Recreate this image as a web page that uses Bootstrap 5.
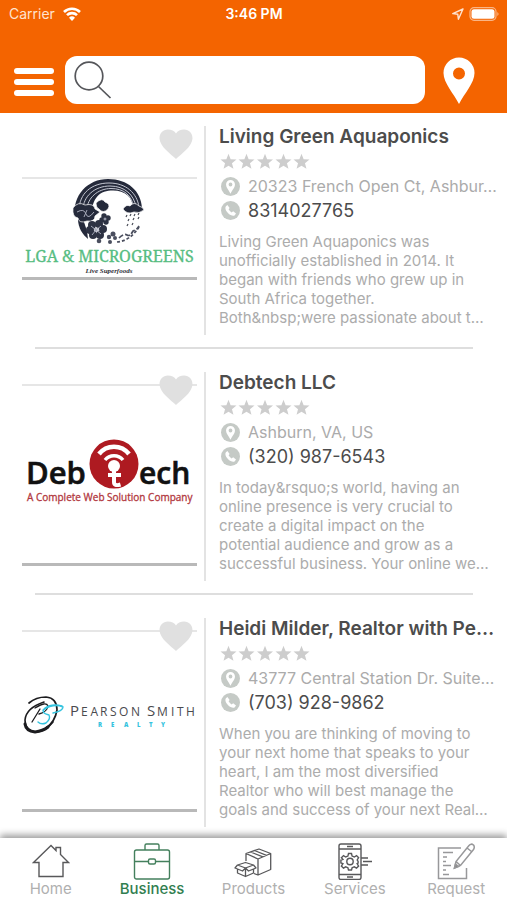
<!DOCTYPE html>
<html lang="en">
<head>
<meta charset="utf-8">
<meta name="viewport" content="width=device-width, initial-scale=1">
<title>Business directory</title>
<link rel="stylesheet" href="https://cdn.jsdelivr.net/npm/bootstrap@5.3.0/dist/css/bootstrap.min.css">
<style>
  body { font-family: Inter, "Liberation Sans", sans-serif; color: #4c4c4c; background: #fff; }
  .app-header { background: #f46400; color: #fff; height: 113px; }
  .status-bar { height: 28px; font-size: 14px; line-height: 28px; padding: 0 8px 0 9px; }
  .status-side { flex: 1 1 0; }
  .carrier { color: #ffe3cf; }
  .search-row { padding: 0 32px 9px 13px; gap: 11px; }
  .search-box { height: 48px; background: #fff; border-radius: 12px; padding-left: 9px; }
  .search-box input { outline: 0; min-width: 0; }
  .plain-btn { background: none; border: 0; padding: 0; line-height: 0; color: inherit; }
  .pin-btn { margin-left: 7px; }
  .listings { padding-top: 13px; }
  .listing { padding: 0 9px 0 22px; }
  .listing-body { height: 209px; }
  .thumb { width: 175px; height: 209px; padding-top: 12px; }
  .thumb-frame { border-top: 2px solid #e6e6e6; border-bottom: 3px solid #b9b9b9; }
  .thumb-frame svg { display: block; width: 100%; }
  .thumb-wide { margin-top: 39px; }
  .heart { top: 3px; right: 4px; color: #e0e0e0; }
  .details { border-left: 2px solid #e3e3e3; margin-left: 7px; padding-left: 13px; min-width: 0; }
  .biz-name { font-size: 19px; line-height: 22px; font-weight: 600; margin: 0; }
  .stars { height: 26px; padding: 1px 0 0 1px; color: #cdcdcd; }
  .info-line { height: 24px; gap: 8px; padding-left: 2px; color: #c5cac6; }
  .addr { font-size: 16px; color: #ababab; white-space: nowrap; }
  .phone { font-size: 18px; color: #4c4c4c; }
  .about { font-size: 15px; line-height: 19px; color: #acacac; margin: 10px 9px 0 0; }
  .rule { border: 0; border-top: 2px solid #dedede; opacity: 1; margin: 12px 25px 23px 13px; }
  .tab-bar { background: #fff; height: 62px; box-shadow: 0 -3px 7px rgba(0,0,0,.4); }
  .tab-item { font-size: 15px; line-height: 18px; color: #b0b0b0; padding-top: 4px; }
  .tab-item.active { color: #317e50; font-weight: 500; }
  .tab-item svg { display: block; margin: 0 auto; }
</style>
<script src="https://cdn.jsdelivr.net/npm/bootstrap@5.3.0/dist/js/bootstrap.bundle.min.js"></script>
</head>
<body>
<svg width="0" height="0" class="position-absolute" aria-hidden="true">
  <symbol id="heart" viewBox="0 0 34 30"><path fill="currentColor" d="M17 30C12 25 1 18 .5 9.500C.5 4 4 .5 8.800 .5C12.500 .5 15.600 2 17 4.500C18.400 2 21.500 .5 25.200 .5C30 .5 33.500 4 33.500 9.500C33 18 22 25 17 30z"/></symbol>
  <symbol id="star" viewBox="0 0 24 24"><path fill="currentColor" d="M12 1l3 7.700 8.300.5-6.400 5.200 2.100 8L12 18l-7 4.400 2.100-8L.7 9.200 9 8.700z"/></symbol>
  <symbol id="stars5" viewBox="0 0 90 18"><g fill="currentColor"><use href="#star" width="17" height="17" x="0"/><use href="#star" width="17" height="17" x="18"/><use href="#star" width="17" height="17" x="36.500"/><use href="#star" width="17" height="17" x="55"/><use href="#star" width="17" height="17" x="73"/></g></symbol>
  <symbol id="place" viewBox="0 0 20 20"><circle cx="10" cy="10" r="10" fill="currentColor"/><path fill="#fff" fill-rule="evenodd" d="M10 17.500C8 13.500 5.300 11 5.300 7.900a4.700 4.700 0 0 1 9.400 0C14.700 11 12 13.500 10 17.500zM10 9.900a2 2 0 1 0 0-4a2 2 0 0 0 0 4z"/></symbol>
  <symbol id="call" viewBox="0 0 20 20"><circle cx="10" cy="10" r="10" fill="currentColor"/><path fill="#fff" d="M5.200 5.500l1.500-1.200 2.400 3-1.100 1.500c.7 1.400 1.800 2.500 3.200 3.200l1.600-1.100 3 2.300-1.300 1.700c-.9.900-2.500.8-4.400-.2-2-1.100-3.800-2.900-4.800-4.800-.8-1.700-.9-3.400-.1-4.400z"/></symbol>
</svg>

<div class="d-flex flex-column min-vh-100">
  <header class="app-header d-flex flex-column justify-content-between">
    <div class="status-bar d-flex align-items-center">
      <div class="status-side carrier d-flex align-items-center gap-2">
        <span>Carrier</span>
        <svg width="18" height="14" viewBox="0 0 18 14" fill="none" stroke="#fff" stroke-width="2.600"><path d="M1 5a11.300 11.300 0 0 1 16 0M4 8.200a7 7 0 0 1 10 0"/><path fill="#fff" stroke="none" d="M9 14l-3-3.200a4.300 4.300 0 0 1 6 0z"/></svg>
      </div>
      <div class="fw-semibold">3:46 PM</div>
      <div class="status-side d-flex align-items-center justify-content-end gap-1">
        <svg width="14" height="14" viewBox="0 0 14 14" fill="none" stroke="#ffe3cf" stroke-width="1.400" stroke-linejoin="round"><path d="M12 2L1.800 6.600l5 .7.600 4.900z"/></svg>
        <svg width="30" height="14" viewBox="0 0 30 14"><rect x="1" y=".7" width="26" height="12.600" rx="4" fill="none" stroke="#fab585" stroke-width="1.200"/><rect x="2.500" y="2.300" width="23" height="9.400" rx="2.500" fill="#fff"/><path d="M28.300 5v4q1.300-.8 1.300-2t-1.300-2z" fill="#fab585"/></svg>
      </div>
    </div>
    <div class="search-row d-flex align-items-center">
      <button class="plain-btn" type="button" aria-label="Menu">
        <svg width="41" height="32" viewBox="0 0 41 32"><g fill="#fff"><rect x="1" y="4" width="40" height="6" rx="3"/><rect x="1" y="15" width="40" height="6" rx="3"/><rect x="1" y="26" width="40" height="6" rx="3"/></g></svg>
      </button>
      <div class="search-box flex-grow-1 d-flex align-items-center">
        <svg width="38" height="38" viewBox="0 0 38 38" fill="none" stroke="#55565a" stroke-width="1.700"><circle cx="15" cy="15" r="13.800"/><path d="M24.500 25.500L36.500 37"/></svg>
        <input class="border-0 bg-transparent flex-grow-1" type="text" aria-label="Search">
      </div>
      <button class="plain-btn pin-btn" type="button" aria-label="Location">
        <svg width="32" height="47" viewBox="0 0 32 47"><path fill="#fff" fill-rule="evenodd" d="M16 47C11 37 .5 26 .5 16a15.500 15.500 0 0 1 31 0C31.500 26 21 37 16 47zM16 22.500a6 6 0 1 0 0-12a6 6 0 0 0 0 12z"/></svg>
      </button>
    </div>
  </header>

  <main class="listings flex-grow-1">
    <article class="listing">
      <div class="listing-body d-flex">
        <div class="thumb position-relative flex-shrink-0">
          <div class="thumb-frame thumb-wide">
            <svg height="98" viewBox="0 0 175 98" role="img" aria-label="LGA and Microgreens">
              <path d="M53 38C50 16 66 0 86 0S119 12 120 29L111 30C111 18 103 11.500 91 11.500C78 11.500 70 18 69 38z" fill="#252a3b"/>
              <g fill="none" stroke="#c4c7d2" stroke-width="1">
                <path d="M57 32C57 14 70 4 87 4S115 14 117 28"/>
                <path d="M61 31C61 17 73 7 88 7S112 16 114 28"/>
                <path d="M65 31C65 19 76 9.500 89 9.500S109 16 112 28"/>
              </g>
              <path d="M56 40C56 49 61 56 66 60L65 52L61 40z" fill="#252a3b"/>
              <g fill="#252a3b" stroke="#fff" stroke-width=".7">
                <path d="M51 29q5-7 12-3 9-2 10 4l5 3-5 4q0 6-8 5-8 3-9-3-6-1-5-10z"/>
                <path d="M74 24q6-6 9-1 6 2 3 7-5 5-9 0-3-1-3-6z"/>
                <path d="M101 30q3-5 7-3 4-5 9 0 4 1 5 4-5 4-10 2-7 3-11-3z"/>
              </g>
              <g fill="#2d3243"><circle cx="82" cy="37" r="2.700"/><circle cx="86" cy="39" r="2.700"/><circle cx="84" cy="43" r="2.700"/><circle cx="80" cy="41" r="2.700"/></g>
              <g fill="#2d3243"><circle cx="70" cy="46" r="4"/><circle cx="77" cy="45" r="4"/><circle cx="81" cy="50" r="4"/><circle cx="78" cy="56" r="4"/><circle cx="71" cy="56" r="4"/><circle cx="68" cy="51" r="4"/></g>
              <g fill="#4a4e5e"><circle cx="77" cy="62" r="2.300"/><circle cx="87" cy="58" r="2.200"/><circle cx="91" cy="55" r="2.500"/><circle cx="88" cy="63" r="2"/><circle cx="93" cy="59" r="2"/></g>
              <g fill="none" stroke="#a7aaba" stroke-width="1"><path d="M55 33q7-4 9 2t8-2M62 38l3-7M69 47l5 4 5-4M70 56l4-5 5 4"/><circle cx="74.500" cy="51" r="1.800"/><circle cx="83" cy="40" r="1"/></g>
              <g fill="none" stroke="#4a4e5e" stroke-width="1.700"><path d="M95 63Q108 62 117 48" stroke-dasharray="3 2"/><path d="M97 59q5-5 8-3t6-4q4-1 6-5" stroke-dasharray="5 2"/></g>
              <path d="M105 36l-1 2m5-3l-1 2m5-2l-1 2m5-3l-1 2m-9 4l-1 2m6-3l-1 2m6-3l-1 2m-10 5l-1 2m6-3l-1 2" stroke="#4a4d58" stroke-width="1.200"/>
              <text x="87.500" y="83" text-anchor="middle" font-family="'Noto Serif','Liberation Serif',serif" font-size="16" fill="#57bd82" stroke="#57bd82" stroke-width=".3">LGA &amp; MICROGREENS</text>
              <text x="87" y="94" text-anchor="middle" font-family="'Liberation Serif',serif" font-style="italic" font-weight="bold" font-size="7" fill="#30323a">Live Superfoods</text>
            </svg>
          </div>
          <button class="plain-btn heart position-absolute" type="button" aria-label="Add to favorites"><svg width="34" height="30"><use href="#heart"/></svg></button>
        </div>
        <div class="details flex-grow-1">
          <h2 class="biz-name text-truncate">Living Green Aquaponics</h2>
          <div class="stars d-flex align-items-center"><svg width="90" height="18" role="img" aria-label="Rating"><use href="#stars5"/></svg></div>
          <div class="info-line d-flex align-items-center"><svg class="flex-shrink-0" width="19" height="19"><use href="#place"/></svg><span class="addr">20323 French Open Ct, Ashbur…</span></div>
          <div class="info-line d-flex align-items-center"><svg class="flex-shrink-0" width="19" height="19"><use href="#call"/></svg><span class="phone">8314027765</span></div>
          <p class="about">Living Green Aquaponics was unofficially established in 2014. It began with friends who grew up in South Africa together. Both&amp;nbsp;were passionate about t…</p>
        </div>
      </div>
      <hr class="rule">
    </article>

    <article class="listing">
      <div class="listing-body d-flex">
        <div class="thumb position-relative flex-shrink-0">
          <div class="thumb-frame">
            <svg height="177" viewBox="0 0 175 177" role="img" aria-label="Debtech">
              <g font-family="'Open Sans','Noto Sans',sans-serif" font-weight="600" fill="#111" stroke="#111" stroke-width=".6">
                <text x="4" y="98" font-size="31">Deb</text>
                <text x="117" y="98" font-size="30">ech</text>
              </g>
              <circle cx="92" cy="78" r="24.500" fill="#ae1a21"/>
              <g fill="none" stroke="#fff" stroke-width="4.500"><path d="M77 68a19 19 0 0 1 30 0"/><path d="M83 74a11.500 11.500 0 0 1 18 0" stroke-width="3.500"/></g>
              <circle cx="92" cy="80" r="6" fill="#fff"/>
              <path d="M92 84v12q0 4.500 6.500 2.500M86 89h13" fill="none" stroke="#fff" stroke-width="4"/>
              <text x="5" y="115" font-family="'Open Sans','Noto Sans',sans-serif" font-size="10" fill="#b23840" stroke="#b23840" stroke-width=".3">A Complete Web Solution Company</text>
            </svg>
          </div>
          <button class="plain-btn heart position-absolute" type="button" aria-label="Add to favorites"><svg width="34" height="30"><use href="#heart"/></svg></button>
        </div>
        <div class="details flex-grow-1">
          <h2 class="biz-name text-truncate">Debtech LLC</h2>
          <div class="stars d-flex align-items-center"><svg width="90" height="18" role="img" aria-label="Rating"><use href="#stars5"/></svg></div>
          <div class="info-line d-flex align-items-center"><svg class="flex-shrink-0" width="19" height="19"><use href="#place"/></svg><span class="addr">Ashburn, VA, US</span></div>
          <div class="info-line d-flex align-items-center"><svg class="flex-shrink-0" width="19" height="19"><use href="#call"/></svg><span class="phone">(320) 987-6543</span></div>
          <p class="about">In today&amp;rsquo;s world, having an online presence is very crucial to create a digital impact on the potential audience and grow as a successful business. Your online we…</p>
        </div>
      </div>
      <hr class="rule">
    </article>

    <article class="listing">
      <div class="listing-body d-flex">
        <div class="thumb position-relative flex-shrink-0">
          <div class="thumb-frame">
            <svg height="177" viewBox="0 0 175 177" role="img" aria-label="Pearson Smith Realty">
              <g fill="none" stroke="#1c1c1f" stroke-linecap="round">
                <path d="M7 71Q14 65 24 65Q35 66 35 78Q33 90 24 96" stroke-width="1.700"/>
                <path d="M22 70Q4 76 3 88Q3 99 14 100Q24 99 31 90" stroke-width="1.600"/>
                <path d="M3 92Q4 99 13 100Q21 99 26 95" stroke-width="3"/>
                <path d="M10 90L18 77M13 76Q24 69 26 74Q25 80 17 82" stroke-width="1.300"/>
              </g>
              <g fill="none" stroke="#35c3de" stroke-linecap="round" stroke-width="1.400"><path d="M40 74Q30 71 23 76Q18 81 27 83Q29 87 24 91Q19 93 16 90"/><path d="M21 78Q32 71 41 75Q41 79 31 81"/></g>
              <g font-family="'Open Sans','Noto Sans',sans-serif" fill="#4a4a4e" font-size="12">
                <text x="48 59 68.500 78 88 97 109" y="84"><tspan font-size="15">P</tspan>EARSON</text>
                <text x="125 135 149 155 164" y="84"><tspan font-size="15">S</tspan>MITH</text>
              </g>
              <text x="76 89 102 115 127 139" y="95" font-family="'Open Sans',sans-serif" font-weight="800" font-size="6" fill="#35c3de">REALTY</text>
            </svg>
          </div>
          <button class="plain-btn heart position-absolute" type="button" aria-label="Add to favorites"><svg width="34" height="30"><use href="#heart"/></svg></button>
        </div>
        <div class="details flex-grow-1">
          <h2 class="biz-name text-truncate">Heidi Milder, Realtor with Pe…</h2>
          <div class="stars d-flex align-items-center"><svg width="90" height="18" role="img" aria-label="Rating"><use href="#stars5"/></svg></div>
          <div class="info-line d-flex align-items-center"><svg class="flex-shrink-0" width="19" height="19"><use href="#place"/></svg><span class="addr">43777 Central Station Dr. Suite…</span></div>
          <div class="info-line d-flex align-items-center"><svg class="flex-shrink-0" width="19" height="19"><use href="#call"/></svg><span class="phone">(703) 928-9862</span></div>
          <p class="about">When you are thinking of moving to your next home that speaks to your heart, I am the most diversified Realtor who will best manage the goals and success of your next Real…</p>
        </div>
      </div>
    </article>
  </main>

  <nav class="tab-bar sticky-bottom row row-cols-5 g-0 text-center" aria-label="Sections">
    <a href="#" class="tab-item col text-decoration-none">
      <svg width="38" height="38" viewBox="0 0 38 38" fill="none" stroke="#58585a" stroke-width="1.400"><path d="M7 34.500V20.500H1.500L19 3.500L24 8.500V5.500H28.500V12.500L36.500 20.500H31V34.500z"/></svg>
      Home</a>
    <a href="#" class="tab-item active col text-decoration-none" aria-current="page">
      <svg width="38" height="38" viewBox="0 0 38 38" fill="none" stroke="#44805d" stroke-width="1.400"><rect x="1.500" y="8" width="35" height="29" rx="2"/><path d="M12 8V3.500q0-1.500 1.500-1.500h11q1.500 0 1.500 1.500V8M1.500 19.500H15.500M22.500 19.500H36.500"/><rect x="15.500" y="17" width="7" height="5" rx="1.500"/></svg>
      Business</a>
    <a href="#" class="tab-item col text-decoration-none">
      <svg width="38" height="38" viewBox="0 0 38 38" fill="none" stroke="#58585a" stroke-width="1.300" stroke-linejoin="round"><path d="M12 19V11.500L25 7L36.700 11.500V27.500L24 33L20 31.500M12 11.500L24 17L36.700 11.500M24 17V33M16.500 10L29 14.800M20.500 8.500L32.500 13.300"/><path d="M3.500 27V31L11.500 34.500L19.500 31V27M11.500 27V34.500M3.500 23L11.500 20.500L19.500 23L11.500 26zM3.500 23L1 26L8.500 29L11.500 26L14.500 29L22 26L19.500 23"/></svg>
      Products</a>
    <a href="#" class="tab-item col text-decoration-none">
      <svg width="38" height="38" viewBox="0 0 38 38" fill="none" stroke="#58585a" stroke-width="1.400"><rect x="3" y="2" width="22" height="35.500" rx="2"/><path d="M3 7H25M3 32.500H25M11 4.500H17M11 35H17"/><path d="M25 16H32M27 19.500H36M25 23H32"/><circle cx="14" cy="19.500" r="3.200"/><path d="M12.500 11.500h3l.6 2.600 2.200.9 2.200-1.400 2.100 2.100-1.400 2.200.9 1.600v1.500l-1 .6 1.500 2.500-2.100 2.100-2.200-1.400-2.200.9-.6 2.300h-3l-.6-2.300-2.200-.9-2.200 1.400-2.100-2.100 1.500-2.500-2-.6v-3l2-.6-1.500-1.700 2.100-2.100 2.200 1.400 2.200-.9z"/></svg>
      Services</a>
    <a href="#" class="tab-item col text-decoration-none">
      <svg width="38" height="38" viewBox="0 0 38 38" fill="none" stroke="#98989a" stroke-width="1.500"><path d="M24 6H1.500V36.500H29.500V26M6 10.500H16M6 15H10M6 19.500H9M6 23.500H14M6 28H9M6 32.500H12"/><path d="M17.500 26L19 19.500L32 3.500Q34 1 36.500 3Q38 5 36.500 7.500L23.500 23.500zM30 6L34.500 9.500M19 19.500L23.500 23.500"/><path d="M17.500 26l1-4 3 2.500z" fill="#777"/></svg>
      Request</a>
  </nav>
</div>
</body>
</html>
